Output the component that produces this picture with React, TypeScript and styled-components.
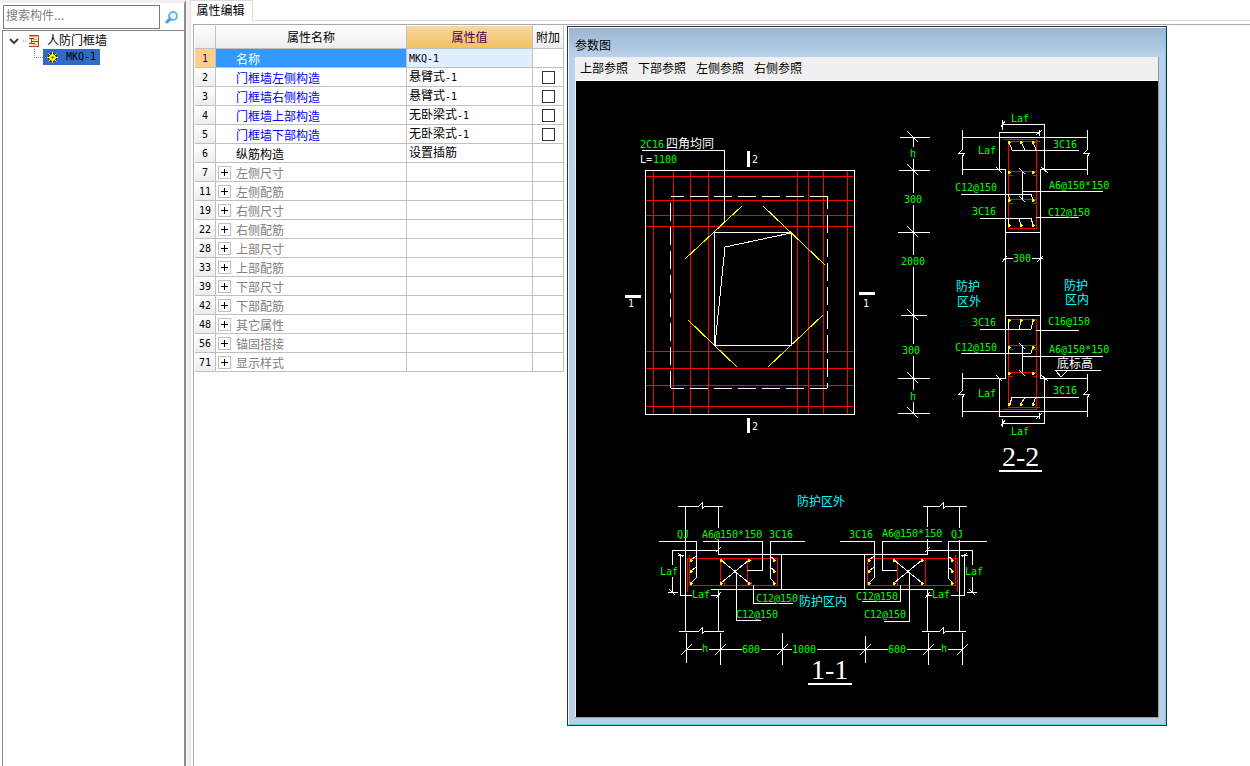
import React from "react";
import styled, { createGlobalStyle } from "styled-components";

const CJK = '"Noto Sans CJK SC", sans-serif';
const MONO = '"DejaVu Sans Mono", "Noto Sans CJK SC", monospace';

const GlobalStyle = createGlobalStyle`
  *, *::before, *::after { box-sizing: border-box; }
  body {
    margin: 0;
    background: #fff;
    color: #000;
    font: 12px/16px ${CJK};
  }
  button, input { font: inherit; color: inherit; }
`;

const Shell = styled.div`
  display: flex;
  min-height: 100vh;
  background: #f0f0f0;
`;

/* ---------- component tree ---------- */

const Sidebar = styled.aside`
  flex: 0 0 186px;
  display: flex;
  flex-direction: column;
  border-top: 3px solid #f0f0f0;
  border-right: 2px solid #8a8d92;
  padding-left: 2px;
  background: #fff;
`;

const SearchBar = styled.form`
  display: flex;
  align-items: center;
  height: 27px;
  padding-left: 1px;
`;

const SearchInput = styled.input`
  flex: 1;
  min-width: 0;
  height: 24px;
  padding: 0 2px 4px;
  border: 1px solid #7a7a7a;
  background: #fff;
  outline: none;
  &::placeholder { color: #808080; opacity: 1; }
`;

const SearchButton = styled.button`
  display: grid;
  place-items: center;
  width: 24px;
  height: 24px;
  padding: 0;
  border: 0;
  background: none;
`;

const Tree = styled.ul`
  flex: 1;
  margin: 0;
  padding: 2px 0 0;
  border: solid #828790;
  border-width: 1px 0 0 1px;
  list-style: none;
`;

const TreeRow = styled.li<{ $indent: number }>`
  display: flex;
  align-items: center;
  height: 16px;
  padding-left: ${(p) => p.$indent}px;
`;

const Chevron = styled.button`
  display: grid;
  width: 14px;
  padding: 0;
  border: 0;
  background: none;
`;

const TreeLabel = styled.span`
  padding: 0 0 2px 7px;
`;

const SelectedNode = styled.span`
  display: flex;
  align-items: center;
  gap: 7px;
  width: 57px;
  height: 16px;
  padding-left: 3px;
  background: #316ac5;
`;

/* ---------- property editor ---------- */

const Main = styled.main`
  flex: 1;
  min-width: 0;
  display: flex;
  flex-direction: column;
  margin-left: 4px;
  background: #fff;
  border-left: 1px solid #dcdcdc;
`;

const TabStrip = styled.div`
  display: flex;
  height: 21px;
  &::after {
    content: "";
    flex: 1;
    border-bottom: 1px solid #dcdcdc;
  }
`;

const Tab = styled.button`
  width: 62px;
  padding: 0 2px 2px 0;
  border: solid #dcdcdc;
  border-width: 1px 1px 0 0;
  background: #fff;
`;

const Workspace = styled.div`
  flex: 1;
  display: flex;
  align-items: flex-start;
  gap: 3px;
  margin: 3px 0 0 2px;
  padding: 1px 0 0 1px;
  border: solid #a9a9ad;
  border-width: 1px 0 0 1px;
`;

const Grid = styled.table`
  flex: none;
  width: 369px;
  table-layout: fixed;
  border-collapse: separate;
  border-spacing: 0;
`;

const HeadCell = styled.th<{ $active?: boolean }>`
  height: 23px;
  padding: 0;
  border: solid #c0c0c0;
  border-width: 0 1px 1px 0;
  background: ${(p) =>
    p.$active
      ? "linear-gradient(#f8d8a0, #f2c060)"
      : "linear-gradient(#ffffff, #ededed)"};
  color: ${(p) => (p.$active ? "#500050" : "#000")};
  font-weight: 400;
  white-space: nowrap;
`;

const IndexCell = styled.th<{ $active?: boolean }>`
  height: 19px;
  padding: 1px 0 0;
  border: solid #c0c0c0;
  border-width: 0 1px 1px 0;
  background: ${(p) =>
    p.$active ? "#ffd08a" : "linear-gradient(#ffffff, #ededed)"};
  color: ${(p) => (p.$active ? "#500050" : "#000")};
  font: 10px/16px ${MONO};
`;

const Cell = styled.td<{ $fill?: string }>`
  height: 19px;
  padding: 0;
  border: solid #c0c0c0;
  border-width: 0 1px 1px 0;
  background: ${(p) => p.$fill ?? "#fff"};
  line-height: 16px;
`;

const NameBox = styled.div<{ $tone: string }>`
  display: flex;
  align-items: center;
  height: 18px;
  padding: 1px 0 0 2px;
  color: ${(p) => p.$tone};
`;

const NameSlot = styled.span`
  flex: 0 0 18px;
  display: flex;
`;

const Expander = styled.button`
  width: 13px;
  height: 13px;
  padding: 0;
  border: 1px solid #c0c0c0;
  background:
    linear-gradient(#000, #000) center / 7px 1px no-repeat,
    linear-gradient(#000, #000) center / 1px 7px no-repeat,
    #fff;
`;

const Value = styled.div`
  height: 18px;
  padding-left: 2px;
`;

const Latin = styled.span`
  font: 10px/16px ${MONO};
`;

const Tick = styled.input`
  display: block;
  appearance: none;
  width: 13px;
  height: 13px;
  margin: 0 auto;
  border: 1px solid #333;
  background: #fff;
  &:checked { background: #3399ff; }
`;

/* ---------- parameter window ---------- */

const Window = styled.section`
  flex: none;
  border: 1px solid #2f3338;
`;

const Frame = styled.div`
  padding: 0 6px 6px;
  border: 1px solid #5cd0ee;
  border-top-color: #f4f8fc;
  border-left-color: #f4f8fc;
  background: linear-gradient(#9ab4d1, #b9d1ea 28px, #b9cfe7);
`;

const TitleBar = styled.h2`
  margin: 0;
  height: 29px;
  padding: 9px 0 0;
  font-size: 12px;
  line-height: 16px;
  font-weight: 400;
`;

const Client = styled.div`
  border: solid #989898;
  border-width: 0 1px 1px 0;
  background: #f0f0f0;
`;

const MenuBar = styled.nav`
  display: flex;
  gap: 10px;
  height: 24px;
  padding-left: 5px;
  border-bottom: 1px solid #fff;
`;

const MenuItem = styled.button`
  padding: 0 0 1px;
  border: 0;
  background: none;
`;

const Drawing = styled.svg`
  display: block;
  border-left: 1px solid #f0f0f0;
  background: #000;
`;

const Ink = styled.path<{ $color?: string; $weight?: number }>`
  fill: none;
  stroke: ${(p) => p.$color ?? "#fff"};
  stroke-width: ${(p) => p.$weight ?? 1}px;
  shape-rendering: crispEdges;
`;

const Note = styled.text<{ $color?: string; $size?: number }>`
  fill: ${(p) => p.$color ?? "#00ff00"};
  font-family: ${MONO};
  font-size: ${(p) => p.$size ?? 10}px;
`;

const ViewTitle = styled.text`
  fill: #fff;
  font-family: "Liberation Serif", serif;
  font-size: 28px;
`;

const GREEN = "#00ff00";
const CYAN = "#00ffff";
const RED = "#ff0000";
const YELLOW = "#ffff00";
const WHITE = "#ffffff";

type Label = [x: number, y: number, text: string, color?: string, size?: number];

const labels: Label[] = [
  // elevation
  [640, 148, "2C16"],
  [666, 148, "四角均同", WHITE, 12],
  [640, 163, "L=", WHITE],
  [653, 163, "1100"],
  [752, 163, "2", WHITE],
  [752, 430, "2", WHITE],
  [628, 307, "1", WHITE],
  [863, 307, "1", WHITE],
  // vertical dimension chain
  [910, 157, "h"],
  [904, 203, "300"],
  [901, 265, "2000"],
  [902, 354, "300"],
  [910, 400, "h"],
  // section 2-2
  [1011, 122, "Laf"],
  [978, 154, "Laf"],
  [1053, 148, "3C16"],
  [955, 191, "C12@150"],
  [1049, 189, "A6@150*150"],
  [972, 215, "3C16"],
  [1048, 216, "C12@150"],
  [1013, 262, "300"],
  [956, 291, "防护", CYAN, 12],
  [957, 306, "区外", CYAN, 12],
  [1064, 290, "防护", CYAN, 12],
  [1065, 304, "区内", CYAN, 12],
  [972, 326, "3C16"],
  [1048, 325, "C16@150"],
  [955, 351, "C12@150"],
  [1049, 353, "A6@150*150"],
  [1057, 368, "底标高", WHITE, 12],
  [1053, 394, "3C16"],
  [978, 397, "Laf"],
  [1011, 435, "Laf"],
  // section 1-1
  [797, 506, "防护区外", CYAN, 12],
  [799, 606, "防护区内", CYAN, 12],
  [677, 538, "QJ"],
  [702, 538, "A6@150*150"],
  [769, 538, "3C16"],
  [660, 575, "Laf"],
  [692, 598, "Laf"],
  [756, 602, "C12@150"],
  [736, 618, "C12@150"],
  [702, 652, "h"],
  [742, 653, "600"],
  [792, 653, "1000"],
  [849, 538, "3C16"],
  [882, 537, "A6@150*150"],
  [951, 538, "QJ"],
  [965, 575, "Laf"],
  [932, 598, "Laf"],
  [856, 600, "C12@150"],
  [864, 618, "C12@150"],
  [888, 653, "600"],
  [941, 652, "h"],
];

const barPoints: [number, number][] = [
  ...[142, 225, 320, 404].flatMap((y) =>
    [1009, 1021, 1033].map((x) => [x, y] as [number, number])
  ),
  ...[172, 200, 347, 373].flatMap((y) =>
    [1009, 1033].map((x) => [x, y] as [number, number])
  ),
  ...[560, 571, 583].flatMap((y) =>
    [691, 774, 869, 952].map((x) => [x, y] as [number, number])
  ),
  ...[560, 583].flatMap((y) =>
    [721, 749, 894, 922].map((x) => [x, y] as [number, number])
  ),
];

const barDots = barPoints
  .map(([x, y]) => `M${x - 1} ${y - 1}h2M${x - 1} ${y}h3M${x - 1} ${y + 1}h2`)
  .join("");

const gridX = [653, 673, 690, 708, 797, 808, 823, 847];
const gridY = [176, 200, 215, 226, 351, 368, 385, 406];
const rebarGrid =
  gridX.map((x) => `M${x} 171V414`).join("") +
  gridY.map((y) => `M646 ${y}H855`).join("");

const chain: [number, number, number][] = [
  [137, 900, 930],
  [170, 899, 930],
  [232, 898, 930],
  [315, 901, 927],
  [378, 898, 930],
  [413, 898, 930],
];
const chainTicks = chain
  .map(([y, a, b]) => `M${a} ${y}H${b}M907 ${y - 6}L918 ${y + 5}`)
  .join("");

const spans: [number, number, number][] = [
  [686, 633, 663],
  [720, 633, 665],
  [782, 633, 665],
  [865, 636, 663],
  [928, 633, 665],
  [962, 633, 665],
];
const spanTicks = spans
  .map(([x, a, b]) => `M${x} ${a}V${b}M${x - 5} 655L${x + 6} 644`)
  .join("");

const vBreak = (x: number, top: number, mid: number, bottom: number) =>
  `M${x} ${top}V${mid - 3}L${x - 3} ${mid}H${x + 3}L${x} ${mid + 4}V${bottom}`;

const hBreak = (y: number, left: number, mid: number, right: number) =>
  `M${left} ${y}H${mid - 3}L${mid} ${y - 3}V${y + 3}L${mid + 3} ${y}H${right}`;

function ParameterDrawing() {
  return (
    <Drawing
      width="583"
      height="636"
      viewBox="576 81 582 636"
      role="img"
      aria-label="参数图"
    >
      {/* elevation */}
      <Ink $color={RED} d={rebarGrid} />
      <Ink
        d="M645 170H854V414H645Z M714 232H791V345H714Z M791 233L725 247L715 345
           M642 150H724V222"
      />
      <Ink d="M671 196H827 M671 388H827 M827 196V388" strokeDasharray="18 6" strokeDashoffset="5" />
      <Ink d="M670 203V388" strokeDasharray="18 6" />
      <Ink
        $color={YELLOW}
        d="M685 259L742 206 M763 206L825 265 M688 320L737 367 M768 367L823 315"
      />
      <Ink $weight={3} d="M748 151V167 M748 418V433 M625 296H641 M859 293H875" />

      {/* vertical dimension chain */}
      <Ink
        d={
          chainTicks +
          "M913 137V147 M913 159V193 M913 205V255 M913 267V344 M913 356V390 M913 402V413"
        }
      />

      {/* section 2-2, concrete outline */}
      <Ink
        d={
          "M962 137H1087 M962 169H1005V378H962 M1087 169H1040V378H1087 M962 411H1087" +
          "M1005 232H1040 M1005 315H1040" +
          vBreak(962, 130, 153, 175) +
          vBreak(1087, 130, 153, 175) +
          vBreak(962, 373, 394, 417) +
          vBreak(1087, 374, 394, 417)
        }
      />
      {/* anchorage dimensions */}
      <Ink
        d="M1002 124H1044V169 M1002 120V130 M1001 127L1005 121
           M1039 132H999V170 M1039 130V136 M1036 135L1042 130
           M996 167L1002 173 M1041 167L1048 173
           M999 378V416H1039 M1039 413V419 M1036 419L1042 413
           M1044 378V423H1002 M1002 419V427 M1001 426L1005 420
           M996 375L1002 381 M1041 375L1048 381
           M1005 258H1013 M1032 258H1043 M1002 262L1007 256 M1037 262L1043 256"
      />
      <Ink
        $color={RED}
        d="M1003 139H1036V228H1008V141H1040
           M1008 171H1036 M1009 175H1013 M1033 175H1036
           M1008 199H1036 M1009 203H1013 M1033 203H1036
           M1003 409H1036V319H1008V407H1040
           M1008 345H1036 M1009 349H1013 M1033 349H1036
           M1008 372H1036 M1009 376H1013 M1033 376H1036"
      />
      {/* leaders */}
      <Ink
        d="M1079 150H1012L1009 142 M1021 142L1025 150 M1033 142L1036 150
           M1022 172V199 M1019 168L1025 174 M1019 196L1025 202 M1022 191H1103
           M961 194H1031L1033 200 M1008 194L1010 200
           M980 218H1031L1033 225 M1008 218L1009 225 M1019 218L1021 225
           M1036 217H1079
           M980 329H1031L1033 321 M1008 329L1009 321 M1019 329L1021 321
           M1036 330H1079
           M961 353H1031L1033 347 M1008 353L1009 347
           M1022 345V372 M1019 343L1025 349 M1019 370L1025 376 M1022 356H1103
           M1055 370H1101 M1056 371L1061 377L1067 371
           M1079 397H1012L1010 404 M1025 397L1021 404 M1036 397L1033 404"
      />
      <Ink $weight={2} d="M999 471H1042" />

      {/* section 1-1, concrete outline */}
      <Ink
        d={
          hBreak(506, 678, 702, 723) +
          hBreak(631, 679, 702, 724) +
          hBreak(506, 923, 943, 967) +
          hBreak(631, 922, 943, 966) +
          "M685 506V631 M718 506V528 M718 540V554H927V539 M927 506V527" +
          "M959 506V528 M959 540V631 M711 589H933 M718 590V631 M927 590V631" +
          "M781 554V589 M864 554V589"
        }
      />
      {/* anchorage dimensions */}
      <Ink
        d="M718 550H672V565 M672 577V592 M668 592H678 M669 589L675 595
           M692 595H680V554 M678 555H684 M678 553L683 557
           M711 595H718 M716 598L721 592 M716 552L721 547
           M927 550H972V565 M972 577V592 M967 592H977 M969 589L975 595
           M951 595H964V554 M961 555H968 M962 557L967 553
           M927 595H932 M925 598L930 592 M925 552L930 547"
      />
      <Ink
        $color={RED}
        d="M687 592V558H777V585H689V555
           M720 558V585 M747 558V585 M724 558V561 M724 582V585 M751 558V561 M751 582V585
           M957 592V558H867V585H955V555
           M897 558V585 M925 558V585 M893 558V561 M893 582V585 M921 558V561 M921 582V585"
      />
      {/* leaders */}
      <Ink
        d="M659 541H696V578L691 583 M696 556L691 560 M696 567L691 571
           M703 541H762V570H747
           M805 541H770V578L775 583 M770 556L775 560 M770 567L775 571
           M721 560L749 583 M749 560L721 583 M736 572V620H761
           M753 585V603H793
           M840 541H874V578L869 583 M874 556L869 560 M874 567L869 571
           M942 541H882V570H897
           M987 541H948V578L953 583 M948 556L953 560 M948 567L953 571
           M894 560L922 583 M922 560L894 583 M909 572V621H884
           M900 585V601H862"
      />
      <Ink
        d={
          spanTicks +
          "M686 649H702 M709 649H742 M761 649H792 M817 649H888 M907 649H941 M948 649H962"
        }
      />
      <Ink $weight={2} d="M808 684H852" />

      <Ink $color={YELLOW} d={barDots} />

      {labels.map(([x, y, text, color, size], i) => (
        <Note key={i} x={x} y={y} $color={color ?? GREEN} $size={size}>
          {text}
        </Note>
      ))}
      <ViewTitle x="1002" y="466">2-2</ViewTitle>
      <ViewTitle x="811" y="679">1-1</ViewTitle>
    </Drawing>
  );
}

/* ---------- data ---------- */

type Property = {
  no: number;
  name: string;
  value?: string;
  kind: "selected" | "link" | "plain" | "group";
};

const properties: Property[] = [
  { no: 1, name: "名称", value: "MKQ-1", kind: "selected" },
  { no: 2, name: "门框墙左侧构造", value: "悬臂式-1", kind: "link" },
  { no: 3, name: "门框墙右侧构造", value: "悬臂式-1", kind: "link" },
  { no: 4, name: "门框墙上部构造", value: "无卧梁式-1", kind: "link" },
  { no: 5, name: "门框墙下部构造", value: "无卧梁式-1", kind: "link" },
  { no: 6, name: "纵筋构造", value: "设置插筋", kind: "plain" },
  { no: 7, name: "左侧尺寸", kind: "group" },
  { no: 11, name: "左侧配筋", kind: "group" },
  { no: 19, name: "右侧尺寸", kind: "group" },
  { no: 22, name: "右侧配筋", kind: "group" },
  { no: 28, name: "上部尺寸", kind: "group" },
  { no: 33, name: "上部配筋", kind: "group" },
  { no: 39, name: "下部尺寸", kind: "group" },
  { no: 42, name: "下部配筋", kind: "group" },
  { no: 48, name: "其它属性", kind: "group" },
  { no: 56, name: "锚固搭接", kind: "group" },
  { no: 71, name: "显示样式", kind: "group" },
];

const tones = {
  selected: "#ffffff",
  link: "#0000ff",
  plain: "#000000",
  group: "#808080",
};

function MixedText({ text }: { text: string }) {
  return (
    <>
      {text.split(/([\x20-\x7e]+)/).map((part, i) =>
        i % 2 ? <Latin key={i}>{part}</Latin> : part
      )}
    </>
  );
}

function PropertyRow({ item }: { item: Property }) {
  const selected = item.kind === "selected";
  return (
    <tr>
      <IndexCell scope="row" $active={selected}>
        {item.no}
      </IndexCell>
      <Cell $fill={selected ? "#3399ff" : undefined}>
        <NameBox $tone={tones[item.kind]}>
          <NameSlot>
            {item.kind === "group" && <Expander type="button" aria-label={`展开${item.name}`} />}
          </NameSlot>
          {item.name}
        </NameBox>
      </Cell>
      <Cell $fill={selected ? "#e0efff" : undefined}>
        <Value>
          <MixedText text={item.value ?? ""} />
        </Value>
      </Cell>
      <Cell>
        {item.kind === "link" && <Tick type="checkbox" aria-label={`附加${item.name}`} />}
      </Cell>
    </tr>
  );
}

export default function App() {
  return (
    <>
      <GlobalStyle />
      <Shell>
        <Sidebar>
          <SearchBar onSubmit={(e) => e.preventDefault()}>
            <SearchInput type="text" placeholder="搜索构件..." aria-label="搜索构件" />
            <SearchButton type="submit" aria-label="搜索">
              <svg width="14" height="14" viewBox="0 0 14 14" fill="none">
                <circle cx="8" cy="6" r="4" stroke="#6ab4e8" strokeWidth="2" fill="#eaf6ff" />
                <path d="M5 9L2 12" stroke="#4a9cdc" strokeWidth="3" strokeLinecap="round" />
              </svg>
            </SearchButton>
          </SearchBar>
          <Tree>
            <TreeRow $indent={5}>
              <Chevron type="button" aria-label="折叠">
                <svg width="12" height="8" viewBox="0 0 12 8" fill="none">
                  <path d="M2 2L6 6L10 2" stroke="#404040" strokeWidth="2" />
                </svg>
              </Chevron>
              <svg width="18" height="14" viewBox="0 0 18 14" fill="none">
                <path d="M1 7H5" stroke="#808080" strokeDasharray="1 1" />
                <path d="M7 1H17V13H7V10H9V4H7Z" fill="#fbe3c4" />
                <path
                  d="M7 1.500H16.500V12.500H7 M7 4.500H12 M9.500 4.500V9.500 M9.500 7.500H16 M7 9.500H13"
                  stroke="#9a4a20"
                />
                <path d="M8 2.500H15 M11 5.500H15 M11 10.500H15" stroke="#f0a860" />
              </svg>
              <TreeLabel>人防门框墙</TreeLabel>
            </TreeRow>
            <TreeRow $indent={30}>
              <svg width="10" height="16" viewBox="0 0 10 16" fill="none" shapeRendering="crispEdges">
                <path d="M1 0V8 M1 8H10" stroke="#808080" strokeDasharray="1 1" />
              </svg>
              <SelectedNode>
                <svg width="13" height="13" viewBox="0 0 13 13" fill="none">
                  <circle cx="6.500" cy="6.500" r="4.500" fill="#202000" />
                  <path
                    d="M6.500 1V12 M1 6.500H12 M2.500 2.500L10.500 10.500 M10.500 2.500L2.500 10.500"
                    stroke="#ffff00"
                  />
                  <circle cx="6.500" cy="6.500" r="3" stroke="#ffff00" fill="#ffff00" />
                  <circle cx="6.500" cy="6.500" r="1" fill="#202000" />
                </svg>
                <Latin>MKQ-1</Latin>
              </SelectedNode>
            </TreeRow>
          </Tree>
        </Sidebar>

        <Main>
          <TabStrip role="tablist">
            <Tab type="button" role="tab" aria-selected="true">
              属性编辑
            </Tab>
          </TabStrip>
          <Workspace>
            <Grid>
              <colgroup>
                <col width="21" />
                <col width="191" />
                <col width="126" />
                <col width="31" />
              </colgroup>
              <thead>
                <tr>
                  <HeadCell aria-label="序号" />
                  <HeadCell scope="col">属性名称</HeadCell>
                  <HeadCell scope="col" $active>
                    属性值
                  </HeadCell>
                  <HeadCell scope="col">附加</HeadCell>
                </tr>
              </thead>
              <tbody>
                {properties.map((item) => (
                  <PropertyRow key={item.no} item={item} />
                ))}
              </tbody>
            </Grid>

            <Window aria-label="参数图">
              <Frame>
                <TitleBar>参数图</TitleBar>
                <Client>
                  <MenuBar>
                    {["上部参照", "下部参照", "左侧参照", "右侧参照"].map((item) => (
                      <MenuItem key={item} type="button">
                        {item}
                      </MenuItem>
                    ))}
                  </MenuBar>
                  <ParameterDrawing />
                </Client>
              </Frame>
            </Window>
          </Workspace>
        </Main>
      </Shell>
    </>
  );
}
